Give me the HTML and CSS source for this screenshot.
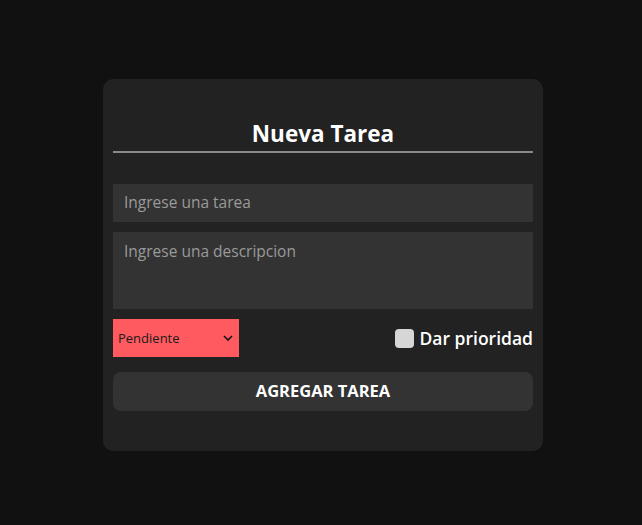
FILE: index.html
```html
<!DOCTYPE html>
<html lang="es">
<head>
<meta charset="utf-8">
<link rel="stylesheet" href="styles.css">
</head>
<body>
<div class="page">
  <form class="card">
    <h2 class="title">Nueva Tarea</h2>
    <div class="fields">
      <input class="field" type="text" placeholder="Ingrese una tarea">
      <textarea class="field area" placeholder="Ingrese una descripcion"></textarea>
      <div class="row">
        <div class="select">
          <span>Pendiente</span>
          <svg class="chev" width="10" height="6" viewBox="0 0 10 6"><path d="M1 1l4 4 4-4" fill="none" stroke="#111" stroke-width="1.6"/></svg>
        </div>
        <label class="check">
          <span class="box"></span>
          <span class="lbl">Dar prioridad</span>
        </label>
      </div>
      <button class="btn" type="button">AGREGAR TAREA</button>
    </div>
  </form>
</div>
</body>
</html>
```
FILE: styles.css
```css
html, body { margin: 0; padding: 0; background: #111111; }
body { font-family: "Open Sans", "Lato", sans-serif; }
.page {
  height: 525px;
  box-sizing: border-box;
  padding: 79px 0 0 103px;
}
.card {
  width: 440px;
  height: 372px;
  box-sizing: border-box;
  background: #222222;
  border-radius: 10px;
  padding: 42px 10px 0 10px;
  display: flex;
  flex-direction: column;
}
.title {
  margin: 0;
  color: #ffffff;
  font-size: 22.5px;
  font-weight: 700;
  line-height: 26px;
  text-align: center;
  padding-bottom: 4px;
  border-bottom: 2px solid #8a8a8a;
}
.fields {
  margin-top: 31px;
  display: flex;
  flex-direction: column;
  gap: 10px;
}
.field {
  display: block;
  box-sizing: border-box;
  width: 100%;
  height: 38px;
  border: none;
  outline: none;
  background: #333333;
  color: #ddd;
  font-family: inherit;
  font-size: 15.5px;
  padding: 0 11px 2px;
  margin: 0;
}
.field::placeholder { color: #9a9a9a; }
.area {
  height: 77px;
  padding: 8px 11px;
  resize: none;
}
.row {
  display: flex;
  justify-content: space-between;
  align-items: center;
}
.select {
  width: 126px;
  height: 38px;
  box-sizing: border-box;
  background: #ff5a5f;
  display: flex;
  align-items: center;
  justify-content: space-between;
  padding: 0 6px 0 5px;
  font-size: 13px;
  color: #1a1a1a;
}
.chev { margin-right: 0; }
.check {
  display: flex;
  align-items: center;
  gap: 6px;
}
.box {
  width: 19px;
  height: 19px;
  background: #d6d6d6;
  border-radius: 4px;
}
.lbl {
  color: #ffffff;
  font-size: 17.5px;
  font-weight: 600;
}
.btn {
  margin-top: 5px;
  height: 39px;
  border: none;
  border-radius: 8px;
  background: #333333;
  color: #ffffff;
  font-family: inherit;
  font-weight: 700;
  font-size: 16.5px;
  padding: 0 0 2px;
}
```
